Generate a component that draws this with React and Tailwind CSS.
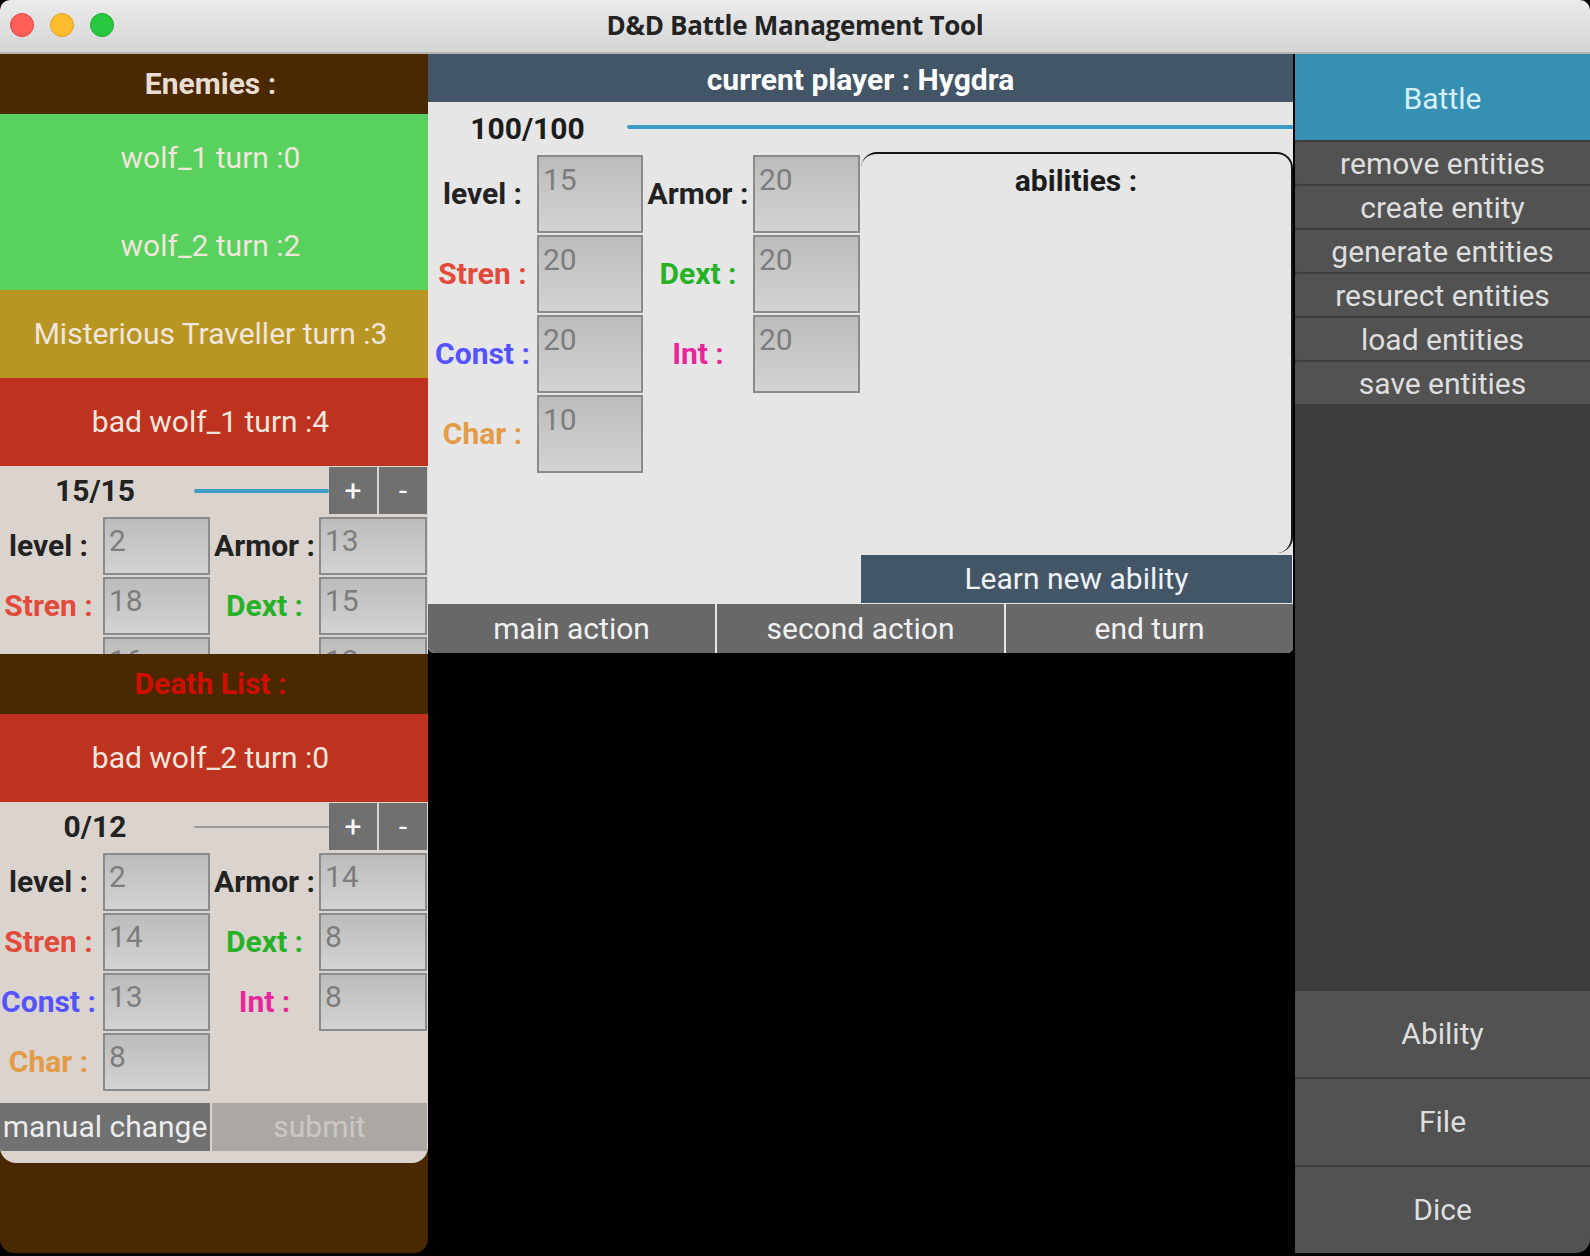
import React from 'react'

const labelColors = {
    level: 'text-[#222222]',
    Armor: 'text-[#222222]',
    Stren: 'text-[#e24b3b]',
    Dext: 'text-[#27b127]',
    Const: 'text-[#5353ff]',
    Int: 'text-[#e8259b]',
    Char: 'text-[#e39b45]',
}

function StatLabel({ name, className = '' }) {
    return (
        <div className={`flex items-center justify-center font-bold whitespace-nowrap ${labelColors[name]} ${className}`}>
            {name} :
        </div>
    )
}

function StatBox({ value, tall }) {
    return (
        <div className={`border-2 border-[#8b8b8b] bg-gradient-to-b from-[#bcbcbc] to-[#d3d3d3] text-[#7d7d7d] pl-[4px] leading-[33px] ${tall ? 'pt-[6px]' : 'pt-[5px]'}`}>
            {value}
        </div>
    )
}

function EntityRow({ name, color }) {
    return (
        <div className={`h-[88px] shrink-0 flex items-center justify-center pr-[7px] text-[#f0e6dc] ${color}`}>
            {name}
        </div>
    )
}

function EnemyStats({ hp, active, stats, clip }) {
    return (
        <div className={`bg-[#dbd4ce] shrink-0 ${clip ? 'h-[188px] overflow-hidden' : 'rounded-b-[16px] pb-[12px]'}`}>
            <div className="h-[51px] flex items-start pt-[1px]">
                <div className="w-[190px] h-[47px] flex items-center justify-center font-bold text-[#222222]">{hp}</div>
                <div className="flex-1 h-[47px] flex items-center pl-[4px]">
                    <div className={`w-full rounded-full ${active ? 'h-[4px] bg-[#3d9cc6]' : 'h-[2px] bg-[#9a9a9a]'}`}></div>
                </div>
                <button className="w-[48px] h-[47px] bg-[#707070] text-white flex items-center justify-center">+</button>
                <button className="w-[48px] h-[47px] ml-[2px] mr-[1px] bg-[#707070] text-white flex items-center justify-center">-</button>
            </div>
            <div className="grid grid-cols-[103px_107px_109px_108px] auto-rows-[58px] gap-y-[2px]">
                <StatLabel name="level" className="pr-[6px]" />
                <StatBox value={stats.level} />
                <StatLabel name="Armor" />
                <StatBox value={stats.armor} />
                <StatLabel name="Stren" className="pr-[6px]" />
                <StatBox value={stats.stren} />
                <StatLabel name="Dext" />
                <StatBox value={stats.dext} />
                <StatLabel name="Const" className="pr-[6px]" />
                <StatBox value={stats.const} />
                <StatLabel name="Int" />
                <StatBox value={stats.int} />
                <StatLabel name="Char" className="pr-[6px]" />
                <StatBox value={stats.char} />
            </div>
            <div className="flex gap-[2px] mt-[12px] h-[48px]">
                <button className="w-[210px] bg-[#717171] text-[#ececec] rounded-bl-[3px] whitespace-nowrap overflow-hidden flex items-center justify-center">manual change</button>
                <button className="flex-1 bg-[#aba8a4] text-[#cbc8c4] mr-[1px] flex items-center justify-center">submit</button>
            </div>
        </div>
    )
}

function LeftPanel() {
    return (
        <div className="w-[428px] h-[1199px] bg-[#4a2900] rounded-b-[14px] flex flex-col overflow-hidden">
            <div className="h-[60px] shrink-0 flex items-center justify-center pr-[7px] font-bold text-[#e9ddd3]">Enemies :</div>
            <EntityRow name="wolf_1 turn :0" color="bg-[#58d15f]" />
            <EntityRow name="wolf_2 turn :2" color="bg-[#58d15f]" />
            <EntityRow name="Misterious Traveller turn :3" color="bg-[#b99524]" />
            <EntityRow name="bad wolf_1 turn :4" color="bg-[#bf321f]" />
            <EnemyStats hp="15/15" active clip stats={{ level: 2, armor: 13, stren: 18, dext: 15, const: 16, int: 12, char: 10 }} />
            <div className="h-[60px] shrink-0 flex items-center justify-center pr-[7px] font-bold text-[#d10f00]">Death List :</div>
            <EntityRow name="bad wolf_2 turn :0" color="bg-[#bf321f]" />
            <EnemyStats hp="0/12" stats={{ level: 2, armor: 14, stren: 14, dext: 8, const: 13, int: 8, char: 8 }} />
        </div>
    )
}

function MiddlePanel() {
    return (
        <div className="w-[865px] h-[599px] bg-[#e6e6e6] rounded-b-[6px] flex flex-col overflow-hidden">
            <div className="h-[48px] shrink-0 bg-[#435668] flex items-center justify-center pt-[4px] font-bold text-white">
                current player : Hygdra
            </div>
            <div className="h-[50px] shrink-0 flex items-center">
                <div className="w-[199px] pt-[4px] text-center font-bold text-[#1c1c1c]">100/100</div>
                <div className="flex-1 h-[4px] bg-[#3d9cc6] rounded-l-full"></div>
            </div>
            <div className="h-[451px] flex">
                <div className="w-[433px] pt-[3px]">
                    <div className="grid grid-cols-[109px_106px_110px_107px] auto-rows-[78px] gap-y-[2px]">
                        <StatLabel name="level" />
                        <StatBox value={15} tall />
                        <StatLabel name="Armor" />
                        <StatBox value={20} tall />
                        <StatLabel name="Stren" />
                        <StatBox value={20} tall />
                        <StatLabel name="Dext" />
                        <StatBox value={20} tall />
                        <StatLabel name="Const" />
                        <StatBox value={20} tall />
                        <StatLabel name="Int" />
                        <StatBox value={20} tall />
                        <StatLabel name="Char" />
                        <StatBox value={10} tall />
                    </div>
                </div>
                <div className="flex-1 flex flex-col">
                    <div className="h-[401px] border-t-2 border-r-2 border-[#161616] rounded-[16px] pt-[12px] text-center font-bold text-[#1c1c1c]">
                        abilities :
                    </div>
                    <button className="h-[48px] mt-[2px] mr-[1px] bg-[#435668] text-[#eef2f5] flex items-center justify-center">
                        Learn new ability
                    </button>
                </div>
            </div>
            <div className="h-[49px] mt-[1px] flex gap-[2px]">
                <button className="flex-1 bg-[#686868] text-[#f0f0f0] rounded-bl-[6px] flex items-center justify-center">main action</button>
                <button className="flex-1 bg-[#686868] text-[#f0f0f0] flex items-center justify-center">second action</button>
                <button className="flex-1 bg-[#686868] text-[#f0f0f0] rounded-br-[6px] flex items-center justify-center">end turn</button>
            </div>
        </div>
    )
}

const menuItems = ['remove entities', 'create entity', 'generate entities', 'resurect entities', 'load entities', 'save entities']

function RightPanel() {
    return (
        <div className="w-[295px] h-[1199px] bg-[#3c3c3c] rounded-br-[14px] flex flex-col overflow-hidden">
            <div className="h-[86px] shrink-0 bg-[#3690b4] flex items-center justify-center pt-[3px] text-[#d6eef7]">Battle</div>
            {menuItems.map((item) => (
                <div key={item} className="h-[42px] mt-[2px] shrink-0 bg-[#525252] rounded-l-[3px] flex items-center justify-center pt-[1px] text-[#dedede]">
                    {item}
                </div>
            ))}
            <div className="flex-1"></div>
            {['Ability', 'File', 'Dice'].map((item, i) => (
                <div key={item} className={`h-[86px] mt-[2px] shrink-0 bg-[#525252] rounded-tl-[3px] flex items-center justify-center text-[#dedede] ${i === 2 ? 'rounded-br-[14px]' : ''}`}>
                    {item}
                </div>
            ))}
        </div>
    )
}

function TitleBar() {
    return (
        <div className="h-[54px] shrink-0 relative bg-gradient-to-b from-[#ebebeb] to-[#d5d5d5] border-b-2 border-[#b3b3b3] rounded-t-[10px] flex items-center justify-center">
            <div className="absolute left-[10px] top-[13px] flex gap-[16px]">
                <span className="w-[24px] h-[24px] rounded-full bg-[#fe5f57] border border-[#e0443e]"></span>
                <span className="w-[24px] h-[24px] rounded-full bg-[#febc2e] border border-[#dea123]"></span>
                <span className="w-[24px] h-[24px] rounded-full bg-[#29c840] border border-[#1aab29]"></span>
            </div>
            <div className="font-['Open_Sans'] font-bold text-[26px] text-[#232323] tracking-[-0.3px] -mt-[2px]">D&amp;D Battle Management Tool</div>
        </div>
    )
}

export default function App() {
    return (
        <div className="w-[1590px] h-[1256px] bg-black flex flex-col overflow-hidden font-['Roboto'] text-[30px] leading-none">
            <TitleBar />
            <div className="flex items-start">
                <LeftPanel />
                <MiddlePanel />
                <div className="w-[2px]"></div>
                <RightPanel />
            </div>
        </div>
    )
}
